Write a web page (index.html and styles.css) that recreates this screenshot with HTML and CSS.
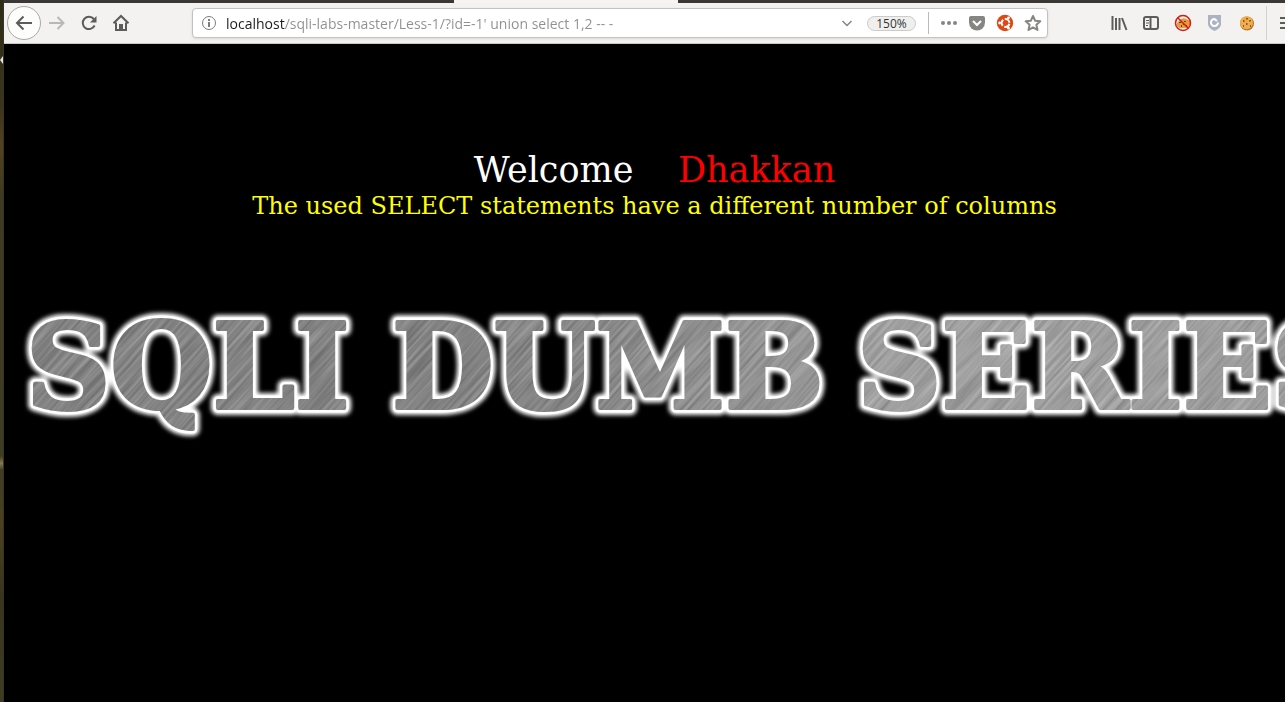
FILE: index.html
```html
<!DOCTYPE html>
<html lang="en">
<head>
<meta charset="utf-8">
<title>Less-1 Error Based - String</title>
<link rel="stylesheet" href="styles.css">
</head>
<body>
<div class="desktop">
  <div class="desktop-edge">
    <svg width="3" height="8" viewBox="0 0 3 8"><path d="M3 0v8L0 4z"/></svg>
  </div>
  <div class="browser">
    <div class="tab-strip"><span class="tab-active"></span></div>
    <nav class="toolbar" aria-label="Navigation">
      <div class="nav-buttons">
        <button class="icon-button back" aria-label="Back">
          <svg width="20" height="20" viewBox="0 0 20 20"><path d="M18 10H3M9.500 3.500L3 10l6.500 6.500"/></svg>
        </button>
        <button class="icon-button forward" aria-label="Forward">
          <svg width="20" height="20" viewBox="0 0 20 20"><path d="M2 10h14M10.500 4l6 6-6 6"/></svg>
        </button>
        <button class="icon-button" aria-label="Reload">
          <svg width="20" height="20" viewBox="0 0 20 20"><path d="M15.600 12.500A6.200 6.200 0 1 1 14.800 6"/><path class="solid" d="M17.500 3v6.500H11z"/></svg>
        </button>
        <button class="icon-button" aria-label="Home">
          <svg width="20" height="20" viewBox="0 0 20 20"><path d="M2.500 10.300L10 3l7.500 7.300M5 9.500V17h10V9.500"/><path class="solid" d="M8 11h4v5H8z"/></svg>
        </button>
      </div>
      <form class="address-bar">
        <button type="button" class="icon-button info" aria-label="Site information">
          <svg width="16" height="16" viewBox="0 0 16 16"><circle cx="8" cy="8" r="6.500"/><path class="info-mark" d="M8 7v5M8 4v2"/></svg>
        </button>
        <input class="url" type="text" aria-label="Address" value="localhost/sqli-labs-master/Less-1/?id=-1' union select 1,2 -- -">
        <button type="button" class="icon-button history" aria-label="Show history">
          <svg width="12" height="12" viewBox="0 0 12 12"><path d="M1.500 4L6 8.500 10.500 4"/></svg>
        </button>
        <button type="button" class="zoom-level">150%</button>
        <span class="divider"></span>
        <div class="page-actions">
          <button type="button" class="icon-button small" aria-label="Page actions">
            <svg width="18" height="18" viewBox="0 0 18 18"><g class="gray"><circle cx="3" cy="9" r="2"/><circle cx="9" cy="9" r="2"/><circle cx="15" cy="9" r="2"/></g></svg>
          </button>
          <button type="button" class="icon-button small" aria-label="Save to Pocket">
            <svg width="18" height="18" viewBox="0 0 18 18"><path class="gray" d="M3 2h12q2 0 2 2v4.500a8 8 0 0 1-16 0V4q0-2 2-2z"/><path class="check" d="M5 7l4 4 4-4"/></svg>
          </button>
          <button type="button" class="icon-button small" aria-label="Ubuntu">
            <svg width="18" height="18" viewBox="0 0 18 18"><circle class="orange" cx="9" cy="9" r="8.200"/><circle class="ring" cx="9.500" cy="9" r="3.900" stroke-dasharray="6.500 1.670" stroke-dashoffset="-0.800"/><circle class="white" cx="3.600" cy="9" r="1.400"/><circle class="white" cx="12.500" cy="3.800" r="1.400"/><circle class="white" cx="12.500" cy="14.200" r="1.400"/></svg>
          </button>
          <button type="button" class="icon-button small star" aria-label="Bookmark this page">
            <svg width="18" height="18" viewBox="0 0 18 18"><path d="M9 2l2.100 4.700 5.200.6-3.900 3.500 1.100 5.200L9 13.400 4.500 16l1.100-5.200-3.900-3.500 5.200-.6z"/></svg>
          </button>
        </div>
      </form>
      <div class="extensions">
        <button class="icon-button tool" aria-label="Library">
          <svg width="18" height="18" viewBox="0 0 18 18"><path d="M2.500 2v14M6 4v12M9.500 4v12M12 4l4.500 12"/></svg>
        </button>
        <button class="icon-button tool" aria-label="Sidebars">
          <svg width="18" height="18" viewBox="0 0 18 18"><rect x="2" y="3" width="14" height="12" rx="2"/><path d="M8.500 3v12"/><path class="thin" d="M4 6.500h3M4 9h3M4 11.500h2"/></svg>
        </button>
        <button class="icon-button tool" aria-label="Block cookies">
          <svg width="18" height="18" viewBox="0 0 18 18"><path class="cookie" d="M3 12q-1-3 2-5 3-4 7-2 5 1 4 5-1 4-6 4-5 1-7-2z"/><path class="chips" d="M6 8v1M11 7v1M12 11v1M7 12h1M9 10h1"/><circle class="ban" cx="9" cy="9" r="7.500"/><path class="ban" d="M3.700 3.700l10.600 10.600"/></svg>
        </button>
        <button class="icon-button tool" aria-label="Shield">
          <svg width="18" height="18" viewBox="0 0 18 18"><path class="shield" d="M2 1h13v9q0 4-6.500 7Q2 14 2 10z"/><path class="shield-mark" d="M12 8.500A3.500 3.500 0 1 1 8.500 5l2.500 2"/></svg>
        </button>
        <button class="icon-button tool" aria-label="Cookies">
          <svg width="18" height="18" viewBox="0 0 18 18"><circle class="cookie-edge" cx="9" cy="9.500" r="7"/><circle class="cookie-top" cx="8.500" cy="8.700" r="6.500"/><path class="chips fine" d="M5 7h1.500M9 4v1.500M12 6v1.500M8 10h1.500M5 12h1M12 12h1"/></svg>
        </button>
        <span class="menu-divider"></span>
        <button class="icon-button menu" aria-label="Menu">
          <svg width="18" height="18" viewBox="0 0 18 18"><path d="M2 4h14M2 9h14M2 14h14"/></svg>
        </button>
      </div>
    </nav>
    <main class="page">
      <header class="message">
        <p class="welcome">Welcome&nbsp;&nbsp;&nbsp;&nbsp;<span class="name">Dhakkan</span></p>
        <p class="error">The used SELECT statements have a different number of columns</p>
      </header>
      <div class="banner">
        <svg width="1500" height="160" viewBox="0 0 1500 160" role="img" aria-label="SQLI DUMB SERIES">
          <defs>
            <filter id="glow" x="-5%" y="-20%" width="110%" height="140%"><feGaussianBlur stdDeviation="2.300"/></filter>
            <filter id="metal" x="0" y="0" width="100%" height="100%" color-interpolation-filters="sRGB">
              <feTurbulence type="fractalNoise" baseFrequency="0.012 0.350" numOctaves="3" seed="4"/>
              <feColorMatrix values="0.3 0 0 0 0.41  0.3 0 0 0 0.41  0.3 0 0 0 0.41  0 0 0 0 1"/>
            </filter>
            <linearGradient id="shade"><stop offset="0" stop-color="#000" stop-opacity=".08"/><stop offset=".3" stop-color="#000" stop-opacity=".08"/><stop offset=".6" stop-color="#fff" stop-opacity=".16"/><stop offset="1" stop-color="#fff" stop-opacity=".1"/></linearGradient>
            <g id="title" class="title">
              <text x="22" y="114">SQLI</text>
              <text x="388" y="114">DUMB</text>
              <text x="853" y="114">SERIES</text>
            </g>
            <mask id="letters" maskUnits="userSpaceOnUse" x="0" y="0" width="1500" height="160"><use href="#title" class="face"/></mask>
          </defs>
          <use href="#title" class="halo" filter="url(#glow)"/>
          <use href="#title" class="rim"/>
          <g mask="url(#letters)">
            <rect x="-200" y="-1200" width="1900" height="2400" transform="rotate(-48 750 80)" filter="url(#metal)"/>
            <rect width="1500" height="160" fill="url(#shade)"/>
          </g>
        </svg>
      </div>
    </main>
  </div>
</div>
</body>
</html>
```
FILE: styles.css
```css
* { box-sizing: border-box; }
body { margin: 0; background: #000; font-family: "Open Sans", "Noto Sans", sans-serif; }
button { border: 0; padding: 0; background: none; font: inherit; color: inherit; }

.desktop { display: flex; min-height: 100vh; overflow: hidden; }
.desktop-edge { flex: none; width: 4px; padding-top: 56px; border-right: 1px solid #35352d; background: linear-gradient(#2f2c16 0, #39351a 15%, #55421c 21%, #3e3a1d 28%, #3f3d20 65%, #85784f 66%, #3f3d20 67%, #4b411d 75%, #38351b 85%, #3f3d20 100%); }
.desktop-edge svg { display: block; fill: #e2e2e0; }
.browser { flex: 1; min-width: 0; display: flex; flex-direction: column; }

.tab-strip { height: 3px; background: #3a3835; padding-left: 450px; }
.tab-active { display: block; width: 224px; height: 3px; background: #f5f4f3; }

.toolbar { display: flex; align-items: center; height: 41px; background: #f3f2f1; border-bottom: 1px solid #c8c8c6; overflow: hidden; }
.nav-buttons { display: flex; align-items: center; width: 188px; flex: none; padding-left: 3px; }
.icon-button { flex: none; display: flex; align-items: center; justify-content: center; width: 32px; height: 32px; color: #5c5c5b; }
.icon-button svg { fill: none; stroke: currentColor; stroke-width: 2; }
.back { width: 34px; height: 34px; border: 1px solid #a9a9a7; border-radius: 50%; background: #fdfdfc; }
.forward { color: #b9b8b7; }
.icon-button .solid { fill: currentColor; stroke: none; }

.address-bar { display: flex; align-items: center; flex: 1; min-width: 0; height: 30px; margin: 0; padding-left: 8px; background: #fff; border: 1px solid #c2c2c0; border-radius: 4px; box-shadow: 0 1px 3px #0000001a; }
.info { width: 16px; color: #7c7c7b; }
.info svg { stroke-width: 1; }
.info .info-mark { stroke-width: 2; }
.url { flex: 1; min-width: 0; height: 28px; margin-left: 9px; border: 0; padding: 0; outline: 0; font: 14px "Open Sans", "Noto Sans", sans-serif; color: transparent; background: linear-gradient(90deg, #1c1c1c 59px, #8f8f8e 59px); background-clip: text; }
.history { width: 20px; color: #858584; }
.history svg { stroke-width: 1.5; }
.zoom-level { width: 49px; height: 15px; margin: 0 12px 0 10px; border: 1px solid #cbcbca; border-radius: 8px; background: #efefee; color: #333; font-size: 12px; line-height: 13px; }
.divider { width: 1px; height: 22px; background: #b9b9b8; }
.page-actions { display: flex; padding-left: 6px; }
.small { width: 28px; color: #858584; }
.icon-button .gray { fill: #858584; stroke: none; }
.icon-button .check { stroke: #fff; }
.icon-button .orange { fill: #dd4814; stroke: none; }
.icon-button .white { fill: #fff; stroke: none; }
.icon-button .ring { stroke: #fff; stroke-width: 2; }
.star svg { stroke-linejoin: round; }

.extensions { display: flex; align-items: center; flex: none; width: 237px; padding-left: 55px; }
.icon-button .thin { stroke-width: 1; }
.icon-button .cookie { fill: #e49b3c; stroke: none; }
.icon-button .cookie-top { fill: #efae4e; stroke: none; }
.icon-button .cookie-edge { fill: #bd6f24; stroke: none; }
.icon-button .chips { stroke: #743c13; }
.icon-button .fine { stroke-width: 1.5; }
.icon-button .ban { stroke: #d51c12; stroke-width: 1.5; }
.icon-button .shield { fill: #abb2c1; stroke: none; }
.icon-button .shield-mark { stroke: #fff; }
.menu-divider { flex: none; width: 1px; height: 34px; margin: 0 11px 0 3px; background: #d2d2d0; }
.menu { width: 18px; }

.page { flex: 1; background: #000; font-family: "DejaVu Serif", serif; }
.message { padding: 105px 0 0 20px; text-align: center; }
.message p { margin: 0; }
.welcome { color: #fff; font-size: 35px; line-height: 42px; }
.name { color: #f00; }
.error { color: #ff0; font-size: 24px; line-height: 30px; }
.banner { margin-top: 73px; overflow: hidden; }
.banner svg { display: block; }
.title { font-family: "DejaVu Serif", serif; font-weight: 700; font-size: 117px; font-kerning: none; stroke-linejoin: round; }
.halo { fill: #fff; stroke: #fff; stroke-width: 14px; }
.rim { fill: #fff; stroke: #fff; stroke-width: 9px; }
.face { fill: #fff; stroke: #fff; stroke-width: 4px; }
```
